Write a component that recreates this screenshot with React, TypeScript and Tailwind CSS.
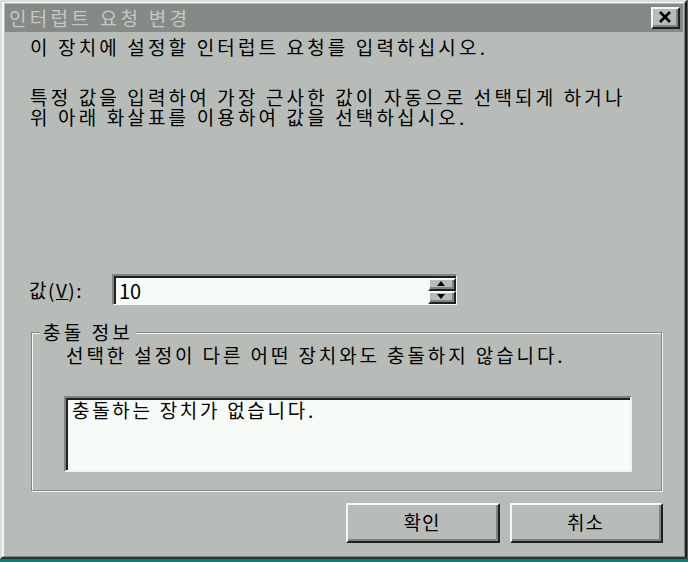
import React from "react";

const font = { fontFamily: '"Noto Sans CJK KR", "Noto Sans", sans-serif' };

function Raised({ className = "", children }: { className?: string; children?: React.ReactNode }) {
  return (
    <div className={"border-t-2 border-l-2 border-t-[#f4f8f4] border-l-[#f4f8f4] border-r-2 border-b-2 border-r-[#202020] border-b-[#202020] bg-[#b8bcb8] " + className}>
      <div className="w-full h-full border-r-2 border-b-2 border-r-[#808480] border-b-[#808480] flex items-center justify-center">
        {children}
      </div>
    </div>
  );
}

export default function App() {
  return (
    <div className="w-[688px] h-[562px] bg-[#008080] overflow-hidden text-black" style={font}>
      <div className="w-[687px] h-[559px] bg-[#b8bcb8] border-l-2 border-t-2 border-l-[#dcdedc] border-t-[#dcdedc] border-r-2 border-b-2 border-r-[#202020] border-b-[#303430] flex flex-col">
        <div className="flex-1 flex flex-col border-l-2 border-t border-l-[#f4f8f4] border-t-[#f4f8f4] border-r border-b border-r-[#808480] border-b-[#808480]">
          {/* title bar */}
          <div className="h-[28px] mx-[1px] mt-[1px] bg-[#868a86] flex items-center justify-between pl-[4px] pr-[3px]">
            <span className="text-[19px] leading-[20px] text-[#c4c8c4] tracking-[3.3px]">인터럽트 요청 변경</span>
            <Raised className="w-[29px] h-[22px]">
              <svg width="14" height="12" viewBox="0 0 14 12">
                <path d="M2 1 L12 11 M12 1 L2 11" stroke="#000" strokeWidth="2.6" />
              </svg>
            </Raised>
          </div>

          {/* body */}
          <div className="flex flex-col pl-[25px] pr-[21px] text-[19px] leading-[20px] tracking-[3.15px]">
            <p className="mt-[5px] ml-[1px]">이 장치에 설정할 인터럽트 요청를 입력하십시오.</p>
            <p className="mt-[30px] ml-[1px]">특정 값을 입력하여 가장 근사한 값이 자동으로 선택되게 하거나</p>
            <p className="ml-[1px]">위 아래 화살표를 이용하여 값을 선택하십시오.</p>

            <div className="mt-[147px] flex items-center h-[31px]">
              <span className="w-[83px] tracking-[1.5px]">
                값(<span className="underline">V</span>):
              </span>
              <div className="w-[345px] h-[31px] bg-[#f8fcf8] border-t-2 border-l-2 border-t-[#808480] border-l-[#808480] border-r border-b border-r-[#f4f8f4] border-b-[#f4f8f4] flex">
                <div className="flex-1 border-t-2 border-l-2 border-t-[#202020] border-l-[#202020] flex items-center pl-[3px] text-[20px] tracking-[0px]">
                  10
                </div>
                <div className="w-[28px] flex flex-col border-t-2 border-t-[#202020]">
                  <Raised className="w-[28px] flex-1">
                    <svg width="8" height="5" viewBox="0 0 8 5"><path d="M4 0 L8 5 L0 5 Z" fill="#000" /></svg>
                  </Raised>
                  <Raised className="w-[28px] flex-1">
                    <svg width="8" height="5" viewBox="0 0 8 5"><path d="M0 0 L8 0 L4 5 Z" fill="#000" /></svg>
                  </Raised>
                </div>
              </div>
            </div>

            {/* group box */}
            <div className="relative mt-[27px] ml-[2px] w-[631px] h-[159px] border border-[#848884] shadow-[inset_1px_1px_0_#f4f8f4,1px_1px_0_#f4f8f4] flex flex-col">
              <span className="absolute left-[8px] top-[-11px] px-[3px] bg-[#b8bcb8] leading-[20px]">충돌 정보</span>
              <p className="mt-[12px] ml-[34px] tracking-[2.9px]">선택한 설정이 다른 어떤 장치와도 충돌하지 않습니다.</p>
              <div className="mt-[31px] ml-[32px] w-[568px] h-[76px] bg-[#f8fcf8] border-t-2 border-l-2 border-t-[#808480] border-l-[#808480] border-r-2 border-b-2 border-r-[#f0f4f0] border-b-[#f0f4f0]">
                <div className="w-full h-full border-t-2 border-l-2 border-t-[#202020] border-l-[#202020] overflow-hidden">
                  <p className="pl-[4px] tracking-[2.7px]">충돌하는 장치가 없습니다.</p>
                </div>
              </div>
            </div>

            {/* buttons */}
            <div className="mt-[12px] flex justify-end gap-[10px]">
              <Raised className="w-[154px] h-[40px]"><span className="text-[19px] tracking-[1px]">확인</span></Raised>
              <Raised className="w-[153px] h-[40px]"><span className="text-[19px] tracking-[1px]">취소</span></Raised>
            </div>
          </div>
        </div>
      </div>
    </div>
  );
}
